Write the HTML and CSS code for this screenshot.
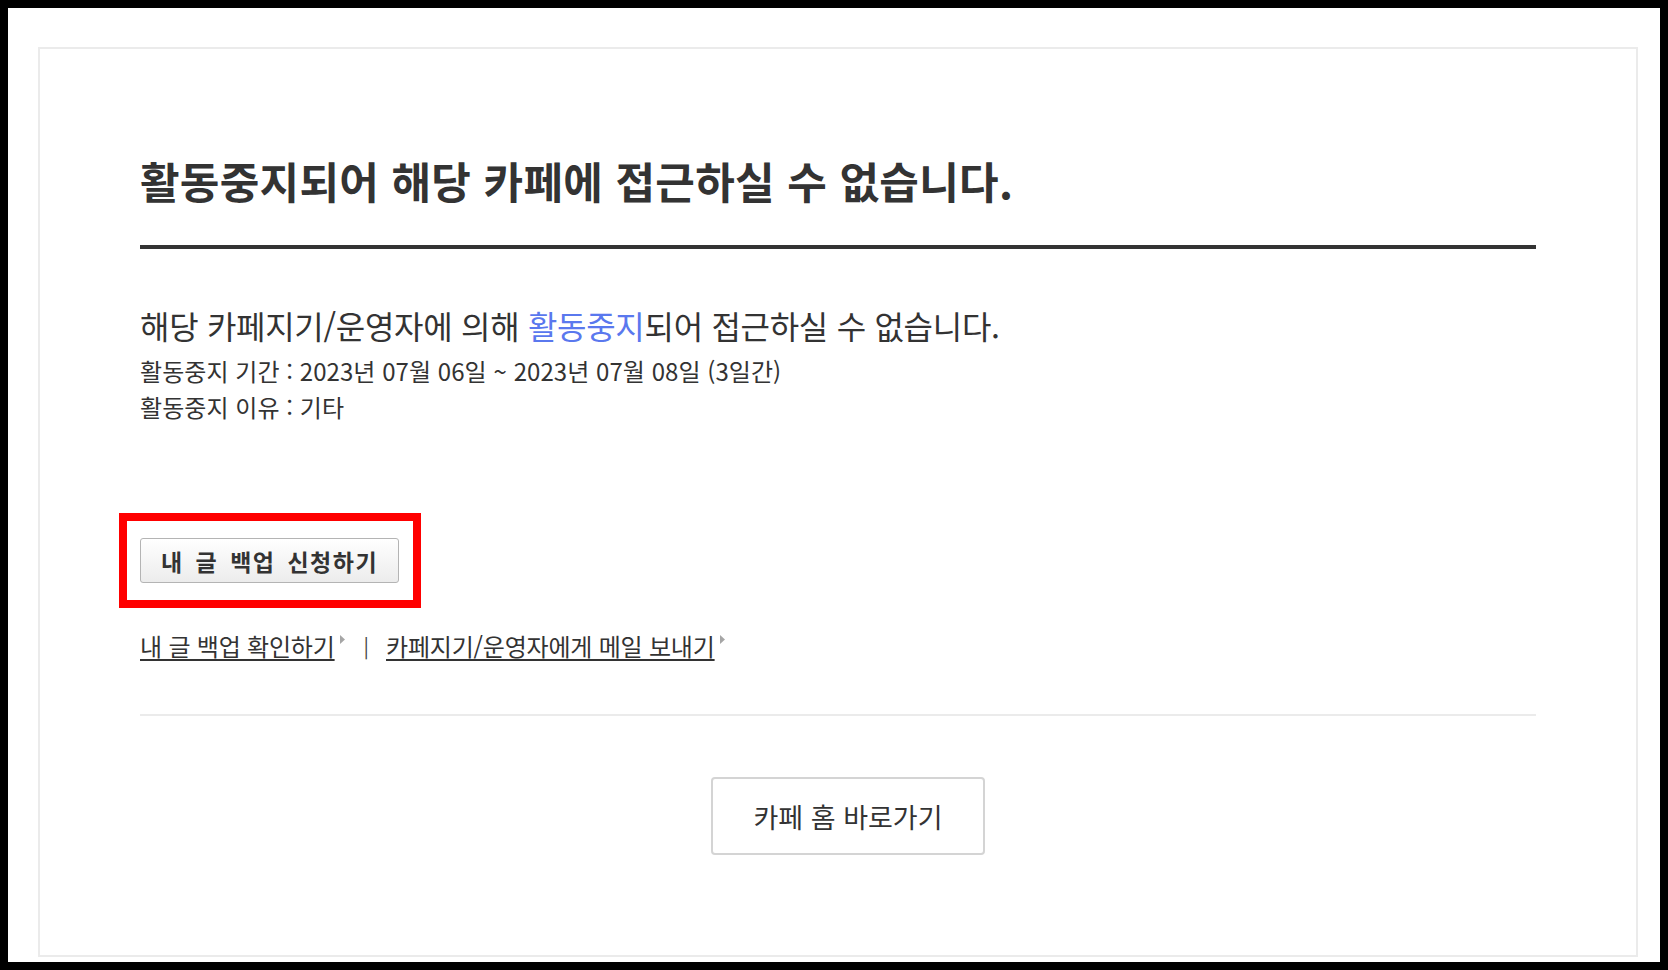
FILE: index.html
```html
<!DOCTYPE html>
<html lang="ko">
<head>
<meta charset="utf-8">
<title>활동중지 안내</title>
<link rel="stylesheet" href="styles.css">
</head>
<body>
<div class="card">
  <h1 class="title">활동중지되어 해당 카페에 접근하실 수 없습니다.</h1>
  <p class="lead">해당 카페지기/운영자에 의해 <span class="hl">활동중지</span>되어 접근하실 수 없습니다.</p>
  <ul class="details">
    <li>활동중지 기간 : 2023년 07월 06일 ~ 2023년 07월 08일 (3일간)</li>
    <li>활동중지 이유 : 기타</li>
  </ul>
  <div class="backup">
    <span class="marked"><button class="backup-btn" type="button">내 글 백업 신청하기</button></span>
  </div>
  <div class="links">
    <a href="#" class="link">내 글 백업 확인하기</a><svg class="arr" width="5" height="9" viewBox="0 0 5 9"><path d="M0 0L5 4.5L0 9Z" fill="#a6a6a6"/></svg>
    <span class="sep">|</span>
    <a href="#" class="link">카페지기/운영자에게 메일 보내기</a><svg class="arr" width="5" height="9" viewBox="0 0 5 9"><path d="M0 0L5 4.5L0 9Z" fill="#a6a6a6"/></svg>
  </div>
  <div class="home">
    <a href="#" class="home-btn">카페 홈 바로가기</a>
  </div>
</div>
</body>
</html>
```

FILE: styles.css
```css
html {
  background: #000;
}
body {
  margin: 8px;
  background: #fff;
  height: 954px;
  box-sizing: border-box;
  padding: 39px 22px 0 30px;
  font-family: "Noto Sans CJK KR", "Noto Sans", sans-serif;
  color: #333;
}
.card {
  height: 910px;
  box-sizing: border-box;
  border: 2px solid #ebebeb;
  padding: 107px 100px 0 100px;
}
.title {
  margin: 0;
  font-size: 43px;
  line-height: 48px;
  font-weight: 700;
  color: #333;
  letter-spacing: 0.3px;
  padding-bottom: 41px;
  border-bottom: 4px solid #333;
}
.lead {
  margin: 56px 0 0;
  font-size: 32px;
  line-height: 40px;
  color: #333;
  letter-spacing: -0.3px;
}
.hl {
  color: #5a78ee;
}
.details {
  list-style: none;
  margin: 8px 0 0;
  padding: 0;
  font-size: 24px;
  line-height: 36px;
  color: #333;
  letter-spacing: 0.05px;
}
.backup {
  margin-top: 113px;
  display: flex;
}
.marked {
  position: relative;
  display: inline-flex;
}
.marked::after {
  content: "";
  position: absolute;
  top: -25px;
  left: -21px;
  right: -22px;
  bottom: -25px;
  border: 8px solid #ff0000;
}
.backup-btn {
  width: 259px;
  height: 45px;
  border: 1px solid #b4b4b4;
  border-radius: 3px;
  background: linear-gradient(#ffffff, #ececec);
  font-family: "Noto Sans CJK KR", sans-serif;
  font-size: 23px;
  font-weight: 700;
  color: #333;
  letter-spacing: 1.5px;
  word-spacing: 4px;
  padding: 0;
}
.links {
  margin-top: 49px;
  display: flex;
  align-items: flex-start;
  font-size: 24px;
  line-height: 28px;
}
.link {
  color: #333;
  text-decoration: underline;
  text-underline-offset: 3px;
  letter-spacing: -0.2px;
}
.arr {
  margin: 3px 0 0 5px;
  flex-shrink: 0;
}
.sep {
  margin: 0 17px 0 19px;
  color: #444;
  font-size: 20px;
}
.home {
  margin-top: 54px;
  border-top: 2px solid #ebebeb;
  padding: 61px 0 0 20px;
  display: flex;
  justify-content: center;
}
.home-btn {
  width: 274px;
  height: 78px;
  box-sizing: border-box;
  border: 2px solid #d4d4d4;
  border-radius: 4px;
  display: flex;
  align-items: center;
  justify-content: center;
  font-size: 27px;
  color: #333;
  text-decoration: none;
  letter-spacing: 0;
}
```
